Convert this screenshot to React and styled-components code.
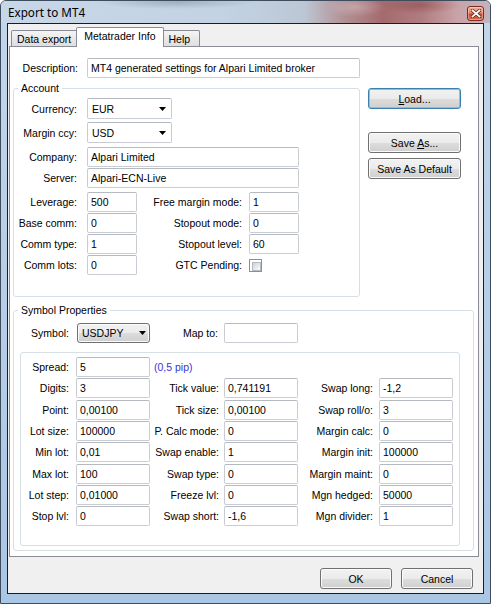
import React from "react";
import styled, { createGlobalStyle, css } from "styled-components";

const UI = `"Liberation Sans", Arial, sans-serif`;

const GlobalStyle = createGlobalStyle`
  html, body { margin: 0; padding: 0; }
  body {
    width: 491px; height: 604px; overflow: hidden;
    font-family: ${UI}; font-size: 10.5px; color: #000;
    background: #fff;
  }
  * { box-sizing: border-box; }
`;

const Window = styled.div`
  width: 491px; height: 604px;
  border: 1px solid #3e4d5e;
  border-radius: 6px 6px 0 0;
  background: linear-gradient(180deg, #c3d6ea 0%, #b7cee7 45%, #aac6e5 100%);
  display: flex; flex-direction: column; overflow: hidden;
`;

const TitleBar = styled.div`
  height: 22px; flex: none;
  display: flex; align-items: flex-start;
  padding: 0 6px 0 7px;
  background:
    radial-gradient(ellipse 80px 7px at 175px 1px, rgba(70, 80, 100, 0.28), transparent),
    radial-gradient(ellipse 40px 9px at 420px 4px, rgba(120, 40, 40, 0.35), transparent),
    radial-gradient(ellipse 30px 10px at 355px 6px, rgba(255, 255, 255, 0.25), transparent),
    linear-gradient(90deg, #c8d7e7 0%, #c3d3e4 45%, #bcc7d4 62%, #b39196 70%, #a46b6e 78%, #b07c80 86%, #c8a2a6 93%, #c3b4be 100%);
`;

const Title = styled.span`
  font-family: "Noto Sans", "Open Sans", sans-serif;
  font-size: 11.7px; line-height: 23px; color: #000;
`;

const CloseButton = styled.div`
  margin-left: auto; margin-top: 5px;
  width: 17px; height: 15px;
  border: 1px solid #7d2b20; border-radius: 3px;
  background: linear-gradient(180deg, #f0b4a2 0%, #e08367 45%, #cd4c2f 55%, #d86a4c 100%);
  box-shadow: inset 0 0 0 1px rgba(255, 220, 210, 0.45);
  display: flex; align-items: center; justify-content: center;
`;

const FrameBody = styled.div`
  flex: 1; min-height: 0;
  display: flex;
  padding: 0 6px 9px 6px;
`;

const Client = styled.div`
  flex: 1; min-width: 0;
  display: flex; flex-direction: column;
  border: 1px solid #1c1c1c;
  background: #f0f0f0;
`;

const TabStrip = styled.div`
  height: 22px; flex: none;
  display: flex; align-items: flex-end;
  padding-left: 3px;
  position: relative; z-index: 1;
`;

const Tab = styled.div`
  height: 16px;
  padding: 0 ${(p) => p.$pr || 6}px 0 5px;
  border: 1px solid #898c95; border-bottom: none;
  border-radius: 2px 2px 0 0;
  background: linear-gradient(180deg, #f4f4f4 0%, #e9e9e9 50%, #dedede 100%);
  display: flex; align-items: center;
  white-space: nowrap;
  ${(p) =>
    p.$active &&
    css`
      height: 20px;
      margin: 0 -2px -1px;
      padding: 0 8px 3px 7px;
      background: #fff;
      position: relative; z-index: 2;
    `}
`;

const Panel = styled.div`
  flex: 1; min-height: 0;
  margin: 0 4px 0 1px;
  background: #fff;
  border: 1px solid #898c95;
  display: flex; flex-direction: column;
  padding: 11px 4px 5px 3px;
`;

const Footer = styled.div`
  height: 36px; flex: none;
  display: flex; justify-content: flex-end; align-items: flex-start;
  gap: 9px;
  padding: 11px 10px 0 0;
`;

const Button = styled.button`
  width: ${(p) => p.$w}px; height: 21px; flex: none;
  margin: 0 0 ${(p) => p.$mb || 0}px;
  padding: 0;
  border: 1px solid #707070; border-radius: 3px;
  background: linear-gradient(180deg, #f2f2f2 0%, #ebebeb 50%, #dddddd 51%, #cfcfcf 100%);
  box-shadow: inset 0 0 0 1px #fbfbfb;
  font-family: ${UI}; font-size: 10.5px; color: #000;
  ${(p) =>
    p.$default &&
    css`
      border-color: #3c7fb1;
      box-shadow: inset 0 0 0 1px #5fd2f5;
    `}
  u { text-decoration: underline; text-underline-offset: 1px; }
`;

const TopSection = styled.div`
  display: flex; gap: 8px; flex: none;
`;

const LeftCol = styled.div`
  width: 347px; flex: none;
  display: flex; flex-direction: column;
`;

const ButtonCol = styled.div`
  width: 93px; flex: none;
  display: flex; flex-direction: column;
  padding-top: 30px;
`;

const Row = styled.div`
  display: flex; align-items: center;
  height: ${(p) => p.$h || 20}px;
  margin-bottom: ${(p) => p.$mb || 0}px;
`;

const Label = styled.span`
  flex: none;
  width: ${(p) => p.$w}px;
  padding-right: ${(p) => p.$pr || 0}px;
  text-align: right; white-space: nowrap;
`;

const TextBox = styled.input.attrs({ type: "text", readOnly: true })`
  width: ${(p) => p.$w}px; height: 20px; flex: none;
  margin: 0;
  border: 1px solid #c9cdd3; border-top-color: #b5b9c0;
  border-radius: 2px;
  padding: 0 0 0 3px;
  font-family: ${UI}; font-size: 10.5px; color: #000;
  background: #fff; outline: none;
`;

const SelectBox = styled.div`
  width: ${(p) => p.$w}px; height: 21px; flex: none;
  border: 1px solid #c9cdd3; border-top-color: #b5b9c0;
  border-radius: 2px;
  background: #fff;
  display: flex; align-items: center; justify-content: space-between;
  padding: 0 5px 0 4px;
`;

const Combo = styled.div`
  width: ${(p) => p.$w}px; height: 20px; flex: none;
  border: 1px solid #707070; border-radius: 3px;
  background: linear-gradient(180deg, #f2f2f2 0%, #ebebeb 50%, #dddddd 51%, #cfcfcf 100%);
  box-shadow: inset 0 0 0 1px #fbfbfb;
  display: flex; align-items: center; justify-content: space-between;
  padding: 0 3px 0 4px;
`;

const GroupBox = styled.fieldset`
  margin: ${(p) => p.$mt}px 0 0;
  padding: ${(p) => p.$pad};
  border: 1px solid #d5dfe5; border-radius: 3px;
  min-width: 0;
  ${(p) =>
    p.$fill &&
    css`
      flex: 1; display: flex; flex-direction: column; min-height: 0;
    `}
`;

const GroupTitle = styled.legend`
  margin-left: 4px; padding: 0 3px;
  line-height: 13px; font-size: 10.5px; color: #000;
`;

const AccountGrid = styled.div`
  display: grid;
  grid-template-columns: 73px 50px 112px 50px;
  grid-auto-rows: 20px;
  row-gap: 1px;
  align-items: center;
`;

const CellLabel = styled.span`
  text-align: right; white-space: nowrap;
  padding-right: ${(p) => p.$pr}px;
`;

const CheckBox = styled.div`
  width: 13px; height: 13px;
  border: 1px solid #8f8f8f;
  background: #fff;
  padding: 2px;
  &::after {
    content: ""; display: block; width: 100%; height: 100%;
    border: 1px solid #b4b9be;
    background: linear-gradient(135deg, #cdd2d7 0%, #eef0f2 70%, #fbfbfb 100%);
  }
`;

const InnerBox = styled.div`
  width: 440px; flex: 1;
  margin: 9px 0 2px 6px;
  border: 1px solid #d5dfe5; border-radius: 3px;
  padding-top: 4px;
  display: grid;
  grid-template-columns: 55px 74px 74px 74px 81px 74px;
  grid-auto-rows: 20px;
  row-gap: 1.33px;
  align-content: start; align-items: center;
`;

const PipNote = styled.span`
  grid-column: 3 / span 4;
  padding-left: 4px;
  color: #3535d2;
`;

const Arrow = () => (
  <svg width="7" height="4" viewBox="0 0 7 4">
    <path d="M0 0H7L3.5 4Z" fill="#000" />
  </svg>
);

const CloseGlyph = () => (
  <svg width="10" height="9" viewBox="0 0 10 9">
    <path d="M1.5 1.5L8.5 7.5M8.5 1.5L1.5 7.5" stroke="#5a2018" strokeWidth="3.2" strokeLinecap="square" />
    <path d="M1.5 1.5L8.5 7.5M8.5 1.5L1.5 7.5" stroke="#ffffff" strokeWidth="1.8" strokeLinecap="square" />
  </svg>
);

const accountPairs = [
  ["Leverage:", "500", "Free margin mode:", "1"],
  ["Base comm:", "0", "Stopout mode:", "0"],
  ["Comm type:", "1", "Stopout level:", "60"],
  ["Comm lots:", "0", "GTC Pending:", null],
];

const symbolRows = [
  ["Digits:", "3", "Tick value:", "0,741191", "Swap long:", "-1,2"],
  ["Point:", "0,00100", "Tick size:", "0,00100", "Swap roll/o:", "3"],
  ["Lot size:", "100000", "P. Calc mode:", "0", "Margin calc:", "0"],
  ["Min lot:", "0,01", "Swap enable:", "1", "Margin init:", "100000"],
  ["Max lot:", "100", "Swap type:", "0", "Margin maint:", "0"],
  ["Lot step:", "0,01000", "Freeze lvl:", "0", "Mgn hedged:", "50000"],
  ["Stop lvl:", "0", "Swap short:", "-1,6", "Mgn divider:", "1"],
];

export default function App() {
  return (
    <>
      <GlobalStyle />
      <Window>
        <TitleBar>
          <Title>Export to MT4</Title>
          <CloseButton>
            <CloseGlyph />
          </CloseButton>
        </TitleBar>
        <FrameBody>
          <Client>
            <TabStrip>
              <Tab>Data export</Tab>
              <Tab $active>Metatrader Info</Tab>
              <Tab $pr={9}>Help</Tab>
            </TabStrip>
            <Panel>
              <TopSection>
                <LeftCol>
                  <Row>
                    <Label $w={74} $pr={9}>Description:</Label>
                    <TextBox $w={273} defaultValue="MT4 generated settings for Alpari Limited broker" />
                  </Row>
                  <GroupBox $mt={4} $pad="3px 0 21px 0">
                    <GroupTitle>Account</GroupTitle>
                    <Row $h={21} $mb={3}>
                      <Label $w={73} $pr={10}>Currency:</Label>
                      <SelectBox $w={85}>
                        <span>EUR</span>
                        <Arrow />
                      </SelectBox>
                    </Row>
                    <Row $h={21} $mb={4}>
                      <Label $w={73} $pr={10}>Margin ccy:</Label>
                      <SelectBox $w={85}>
                        <span>USD</span>
                        <Arrow />
                      </SelectBox>
                    </Row>
                    <Row $mb={1}>
                      <Label $w={73} $pr={10}>Company:</Label>
                      <TextBox $w={212} defaultValue="Alpari Limited" />
                    </Row>
                    <Row $mb={4}>
                      <Label $w={73} $pr={10}>Server:</Label>
                      <TextBox $w={212} defaultValue="Alpari-ECN-Live" />
                    </Row>
                    <AccountGrid>
                      {accountPairs.map(([l1, v1, l2, v2]) => (
                        <React.Fragment key={l1}>
                          <CellLabel $pr={10}>{l1}</CellLabel>
                          <TextBox $w={50} defaultValue={v1} />
                          <CellLabel $pr={7}>{l2}</CellLabel>
                          {v2 === null ? <CheckBox /> : <TextBox $w={50} defaultValue={v2} />}
                        </React.Fragment>
                      ))}
                    </AccountGrid>
                  </GroupBox>
                </LeftCol>
                <ButtonCol>
                  <Button $w={93} $mb={23} $default>
                    <u>L</u>oad...
                  </Button>
                  <Button $w={93} $mb={5}>
                    Save <u>A</u>s...
                  </Button>
                  <Button $w={93}>Save As Default</Button>
                </ButtonCol>
              </TopSection>
              <GroupBox $mt={7} $pad="6px 0 2px 0" $fill>
                <GroupTitle>Symbol Properties</GroupTitle>
                <Row>
                  <Label $w={63} $pr={8}>Symbol:</Label>
                  <Combo $w={73}>
                    <span>USDJPY</span>
                    <Arrow />
                  </Combo>
                  <Label $w={74} $pr={6}>Map to:</Label>
                  <TextBox $w={74} defaultValue="" />
                </Row>
                <InnerBox>
                  <CellLabel $pr={7}>Spread:</CellLabel>
                  <TextBox $w={74} defaultValue="5" />
                  <PipNote>(0,5 pip)</PipNote>
                  {symbolRows.map(([a, av, b, bv, c, cv]) => (
                    <React.Fragment key={a}>
                      <CellLabel $pr={7}>{a}</CellLabel>
                      <TextBox $w={74} defaultValue={av} />
                      <CellLabel $pr={5}>{b}</CellLabel>
                      <TextBox $w={74} defaultValue={bv} />
                      <CellLabel $pr={6}>{c}</CellLabel>
                      <TextBox $w={74} defaultValue={cv} />
                    </React.Fragment>
                  ))}
                </InnerBox>
              </GroupBox>
            </Panel>
            <Footer>
              <Button $w={72}>OK</Button>
              <Button $w={72}>Cancel</Button>
            </Footer>
          </Client>
        </FrameBody>
      </Window>
    </>
  );
}
